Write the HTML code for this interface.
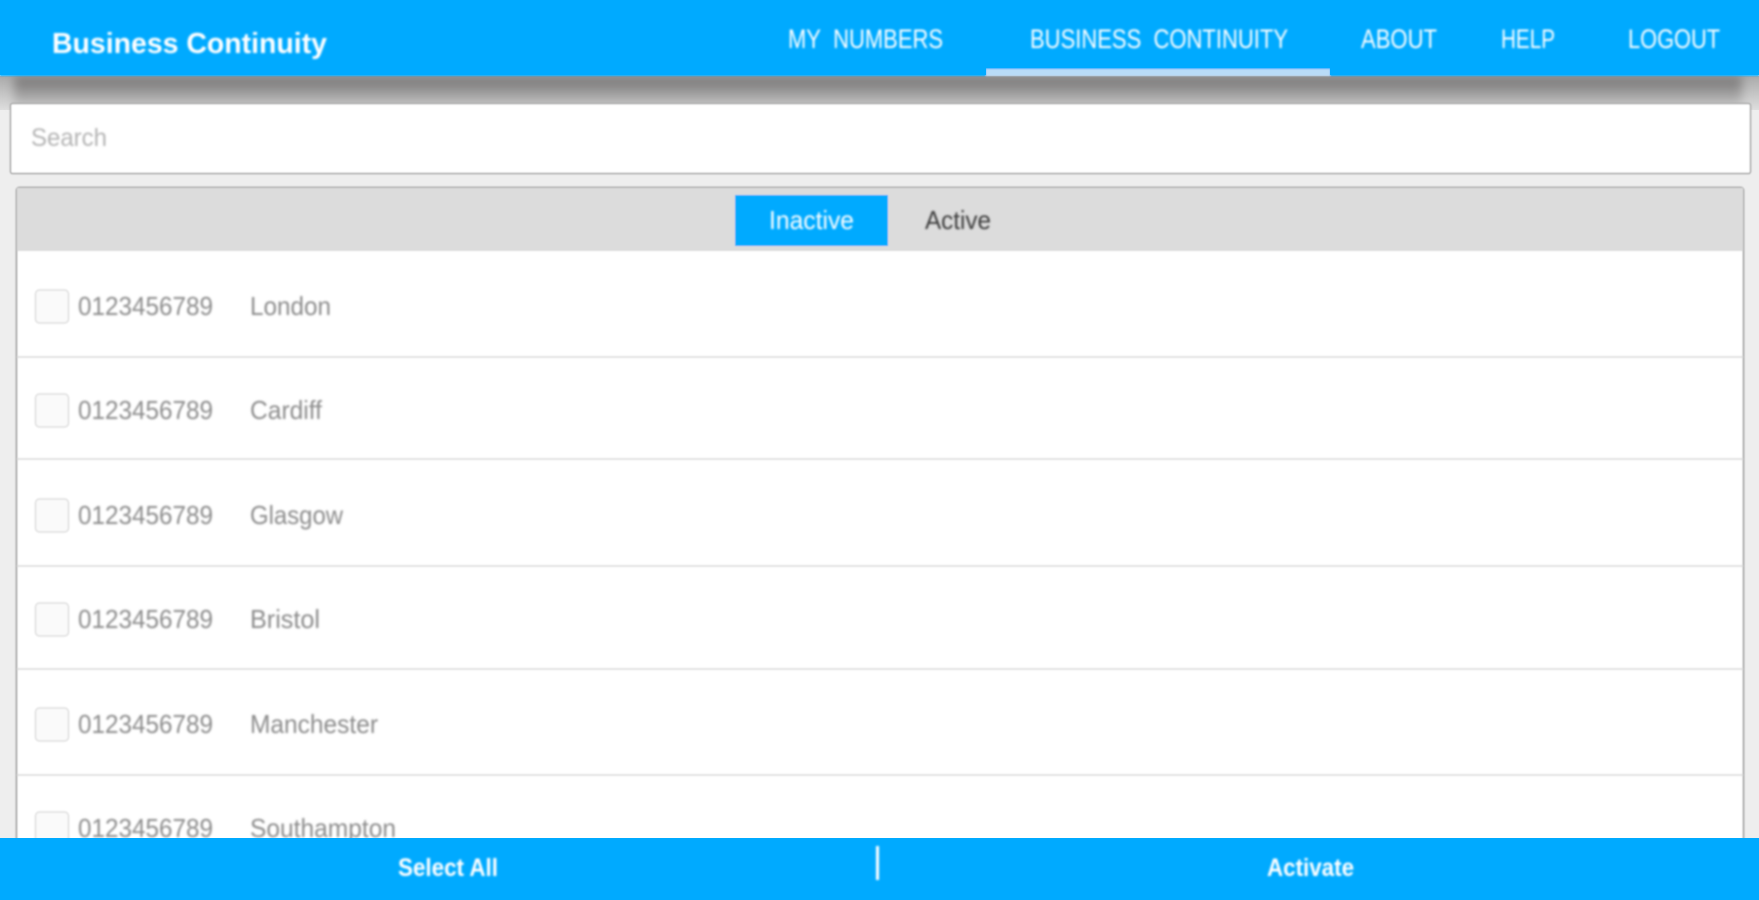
<!DOCTYPE html>
<html lang="en">
<head>
<meta charset="utf-8">
<title>Business Continuity</title>
<style>
html,body{margin:0;padding:0;width:1759px;height:900px;overflow:hidden;background:#eeeeee}
svg{display:block;position:absolute;left:0;top:0;width:1759px;height:900px}
text{font-family:"Liberation Sans",sans-serif}
</style>
</head>
<body>
<svg width="1759" height="900" viewBox="0 0 1759 900" xmlns="http://www.w3.org/2000/svg">
<defs>
<filter id="b" filterUnits="userSpaceOnUse" x="0" y="0" width="1759" height="900"><feGaussianBlur stdDeviation="0.9"/></filter>
<filter id="t" filterUnits="userSpaceOnUse" x="0" y="0" width="1759" height="900"><feGaussianBlur stdDeviation="1.05"/></filter>
<filter id="s" filterUnits="userSpaceOnUse" x="0" y="40" width="1759" height="120"><feGaussianBlur stdDeviation="5"/></filter>
<linearGradient id="g" x1="0" y1="0" x2="0" y2="1"><stop offset="0" stop-color="#6f6d6d"/><stop offset="1" stop-color="#bcbcbc"/></linearGradient>
<linearGradient id="h" x1="0" y1="0" x2="0" y2="1"><stop offset="0" stop-color="#aaaaaa"/><stop offset="1" stop-color="#dedede"/></linearGradient>
</defs>

<rect x="0" y="76" width="1759" height="34" fill="url(#h)"/>
<g filter="url(#s)"><rect x="14" y="76" width="1728" height="28" fill="url(#g)"/></g>

<g filter="url(#b)">
<rect x="0" y="0" width="1759" height="76" fill="#00aaff"/>
<rect x="986" y="69" width="344" height="7" fill="#b9dcf8"/>

<rect x="10.5" y="103.5" width="1740" height="70" rx="2" fill="#fff" stroke="#a8a8a8" stroke-width="1.5"/>

<rect x="16.5" y="187.5" width="1727" height="712" rx="3" fill="#fff" stroke="#b0b0b0" stroke-width="2"/>
<rect x="17" y="188" width="1726" height="63" fill="#dcdcdc"/>
<rect x="735" y="195" width="153" height="51" fill="#00aaff"/>

<g fill="#e2e2e2">
<rect x="17" y="356" width="1726" height="2"/>
<rect x="17" y="458" width="1726" height="2"/>
<rect x="17" y="565" width="1726" height="2"/>
<rect x="17" y="668" width="1726" height="2"/>
<rect x="17" y="774" width="1726" height="2"/>
</g>

<g fill="#fafafa" stroke="#e6e6e6" stroke-width="2">
<rect x="35.5" y="290" width="33" height="33" rx="4"/>
<rect x="35.5" y="394" width="33" height="33" rx="4"/>
<rect x="35.5" y="499" width="33" height="33" rx="4"/>
<rect x="35.5" y="603" width="33" height="33" rx="4"/>
<rect x="35.5" y="708" width="33" height="33" rx="4"/>
<rect x="35.5" y="812" width="33" height="33" rx="4"/>
</g>
</g>

<g filter="url(#t)">
<text x="78" y="315" font-size="26" fill="#8c8c8c" textLength="135" lengthAdjust="spacingAndGlyphs">0123456789</text>
<text x="250" y="315" font-size="26" fill="#8c8c8c" textLength="81" lengthAdjust="spacingAndGlyphs">London</text>
<text x="78" y="419" font-size="26" fill="#8c8c8c" textLength="135" lengthAdjust="spacingAndGlyphs">0123456789</text>
<text x="250" y="419" font-size="26" fill="#8c8c8c" textLength="72" lengthAdjust="spacingAndGlyphs">Cardiff</text>
<text x="78" y="524" font-size="26" fill="#8c8c8c" textLength="135" lengthAdjust="spacingAndGlyphs">0123456789</text>
<text x="250" y="524" font-size="26" fill="#8c8c8c" textLength="93" lengthAdjust="spacingAndGlyphs">Glasgow</text>
<text x="78" y="628" font-size="26" fill="#8c8c8c" textLength="135" lengthAdjust="spacingAndGlyphs">0123456789</text>
<text x="250" y="628" font-size="26" fill="#8c8c8c" textLength="70" lengthAdjust="spacingAndGlyphs">Bristol</text>
<text x="78" y="733" font-size="26" fill="#8c8c8c" textLength="135" lengthAdjust="spacingAndGlyphs">0123456789</text>
<text x="250" y="733" font-size="26" fill="#8c8c8c" textLength="128" lengthAdjust="spacingAndGlyphs">Manchester</text>
<text x="78" y="837" font-size="26" fill="#8c8c8c" textLength="135" lengthAdjust="spacingAndGlyphs">0123456789</text>
<text x="250" y="837" font-size="26" fill="#8c8c8c" textLength="146" lengthAdjust="spacingAndGlyphs">Southampton</text>
<text x="31" y="146" font-size="25" fill="#b4b4b4" textLength="76" lengthAdjust="spacingAndGlyphs">Search</text>
<text x="925" y="229" font-size="26" fill="#3c3c3c" textLength="66" lengthAdjust="spacingAndGlyphs">Active</text>
</g>

<rect x="0" y="838" width="1759" height="62" fill="#00aaff"/>
<rect x="0" y="0" width="1759" height="68" fill="#00aaff"/>
<rect x="0" y="0" width="986" height="75" fill="#00aaff"/>
<rect x="1330" y="0" width="429" height="75" fill="#00aaff"/>
<rect x="986" y="0" width="344" height="68" fill="#00aaff"/>

<g filter="url(#t)">
<text x="52" y="53" font-size="29" font-weight="700" fill="#fff" textLength="275" lengthAdjust="spacingAndGlyphs">Business Continuity</text>
<text x="788" y="48" font-size="27" fill="#fff" textLength="155" lengthAdjust="spacingAndGlyphs">MY&#160;&#160;NUMBERS</text>
<text x="1030" y="48" font-size="27" fill="#fff" textLength="258" lengthAdjust="spacingAndGlyphs">BUSINESS&#160;&#160;CONTINUITY</text>
<text x="1361" y="48" font-size="27" fill="#fff" textLength="76" lengthAdjust="spacingAndGlyphs">ABOUT</text>
<text x="1501" y="48" font-size="27" fill="#fff" textLength="54" lengthAdjust="spacingAndGlyphs">HELP</text>
<text x="1628" y="48" font-size="27" fill="#fff" textLength="92" lengthAdjust="spacingAndGlyphs">LOGOUT</text>
<text x="769" y="229" font-size="26" fill="#fff" textLength="85" lengthAdjust="spacingAndGlyphs">Inactive</text>
<rect x="876" y="846" width="3" height="34" fill="#fff"/>
<text x="398" y="876" font-size="25" font-weight="700" fill="#fff" textLength="100" lengthAdjust="spacingAndGlyphs">Select All</text>
<text x="1267" y="876" font-size="25" font-weight="700" fill="#fff" textLength="87" lengthAdjust="spacingAndGlyphs">Activate</text>
</g>
</svg>
</body>
</html>
